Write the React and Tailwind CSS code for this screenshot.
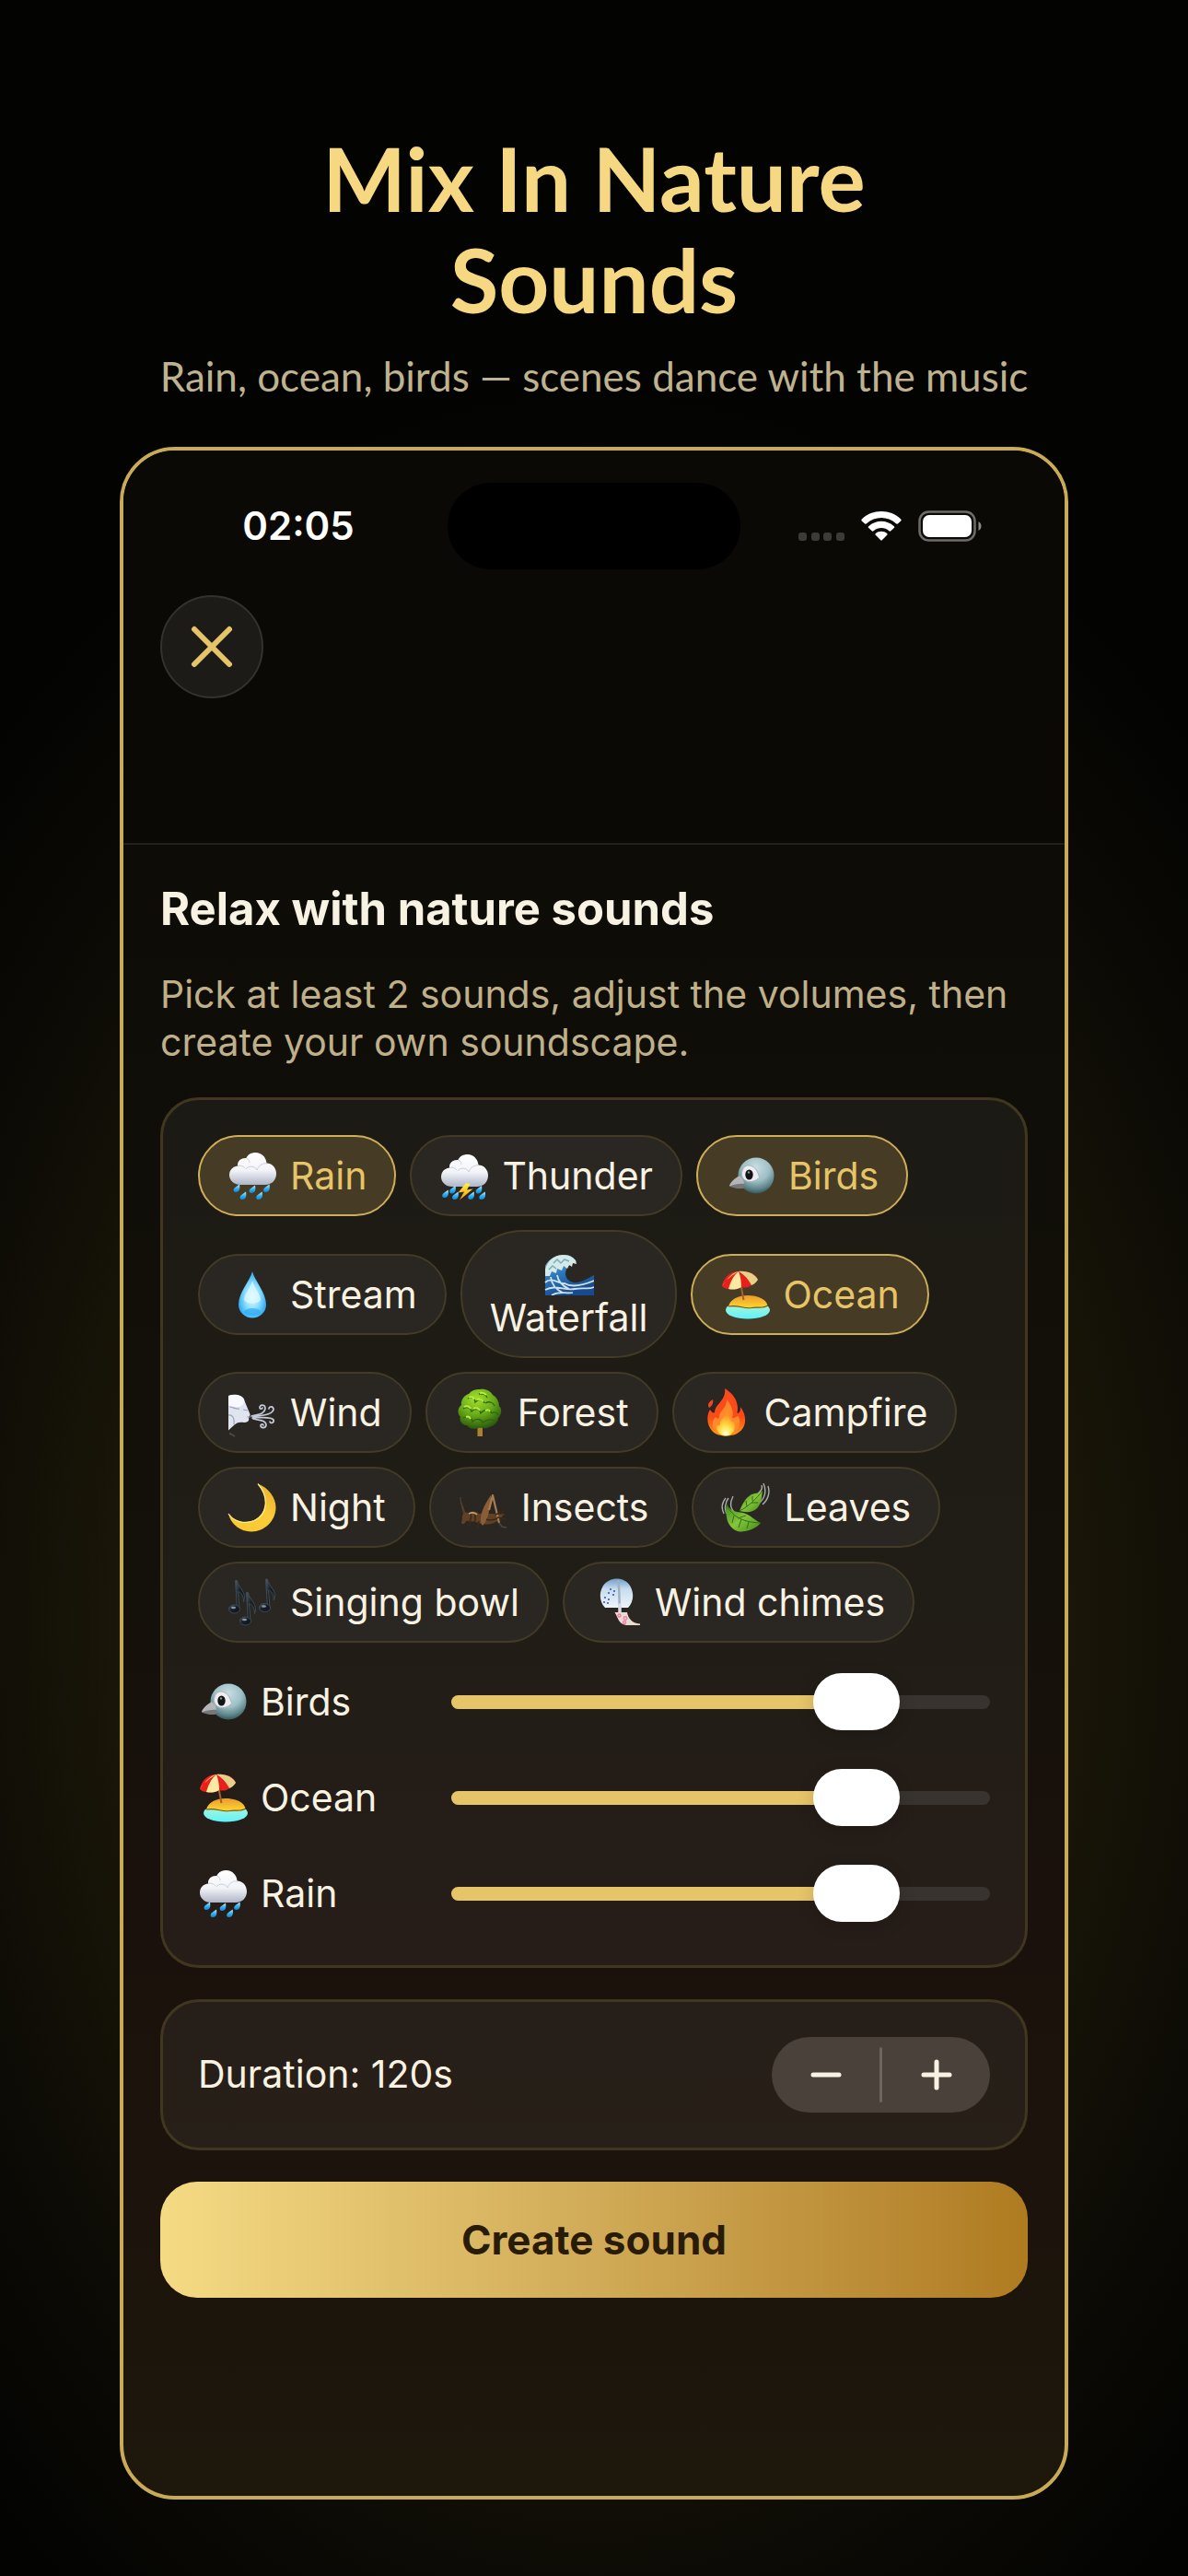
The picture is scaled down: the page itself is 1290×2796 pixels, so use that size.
import { useState } from 'react';

const SOUNDS = [
  { id: 'rain', name: 'Rain', Icon: RainIcon },
  { id: 'thunder', name: 'Thunder', Icon: ThunderIcon },
  { id: 'birds', name: 'Birds', Icon: BirdIcon },
  { id: 'stream', name: 'Stream', Icon: DropIcon },
  { id: 'waterfall', name: 'Waterfall', Icon: WaveIcon, stacked: true },
  { id: 'ocean', name: 'Ocean', Icon: BeachIcon },
  { id: 'wind', name: 'Wind', Icon: WindIcon },
  { id: 'forest', name: 'Forest', Icon: TreeIcon },
  { id: 'campfire', name: 'Campfire', Icon: FireIcon },
  { id: 'night', name: 'Night', Icon: MoonIcon },
  { id: 'insects', name: 'Insects', Icon: CricketIcon },
  { id: 'leaves', name: 'Leaves', Icon: LeavesIcon },
  { id: 'bowl', name: 'Singing bowl', Icon: NotesIcon },
  { id: 'chimes', name: 'Wind chimes', Icon: ChimeIcon },
];

const ROWS = [SOUNDS.slice(0, 3), SOUNDS.slice(3, 6), SOUNDS.slice(6, 9), SOUNDS.slice(9, 12), SOUNDS.slice(12)];

function Emoji({ children }) {
  return (
    <svg viewBox="0 0 54 54" className="w-[54px] h-[54px] -my-px shrink-0" aria-hidden="true">
      {children}
    </svg>
  );
}

// Gradients shared by all the sound icons
function IconDefs() {
  return (
    <svg width="0" height="0" className="absolute" aria-hidden="true">
      <defs>
        <linearGradient id="cloud" x1="0" y1="0" x2="0" y2="1">
          <stop offset="0" stopColor="#ffffff" />
          <stop offset="0.55" stopColor="#f3f4f9" />
          <stop offset="1" stopColor="#aeb5c6" />
        </linearGradient>
        <linearGradient id="drop" x1="0" y1="0" x2="0" y2="1">
          <stop offset="0" stopColor="#c9f1ff" />
          <stop offset="0.5" stopColor="#35b4f5" />
          <stop offset="1" stopColor="#0d84d8" />
        </linearGradient>
        <radialGradient id="bigDrop" cx="0.5" cy="0.55" r="0.6">
          <stop offset="0" stopColor="#e2fbff" />
          <stop offset="0.45" stopColor="#8fe0fd" />
          <stop offset="1" stopColor="#1397f0" />
        </radialGradient>
        <linearGradient id="bolt" x1="0" y1="0" x2="0" y2="1">
          <stop offset="0" stopColor="#fff04a" />
          <stop offset="1" stopColor="#f59c08" />
        </linearGradient>
        <radialGradient id="bird" cx="0.5" cy="0.28" r="0.75">
          <stop offset="0" stopColor="#c9dde3" />
          <stop offset="0.5" stopColor="#9dbfc6" />
          <stop offset="0.8" stopColor="#5c8489" />
          <stop offset="1" stopColor="#2e4b50" />
        </radialGradient>
        <linearGradient id="sand" x1="0" y1="0" x2="0" y2="1">
          <stop offset="0" stopColor="#ea9a35" />
          <stop offset="1" stopColor="#ffd927" />
        </linearGradient>
        <linearGradient id="sea" x1="0" y1="0" x2="0" y2="1">
          <stop offset="0" stopColor="#b8f5d0" />
          <stop offset="1" stopColor="#5df3fb" />
        </linearGradient>
        <linearGradient id="wave" x1="0" y1="0" x2="0.4" y2="1">
          <stop offset="0" stopColor="#7fc4dc" />
          <stop offset="0.5" stopColor="#2c77bd" />
          <stop offset="1" stopColor="#174b8f" />
        </linearGradient>
        <radialGradient id="tree" cx="0.42" cy="0.25" r="0.8">
          <stop offset="0" stopColor="#a4e02a" />
          <stop offset="0.5" stopColor="#68ad18" />
          <stop offset="1" stopColor="#23500b" />
        </radialGradient>
        <linearGradient id="fire" x1="0" y1="0" x2="0" y2="1">
          <stop offset="0" stopColor="#fb4a1d" />
          <stop offset="0.6" stopColor="#fd4a16" />
          <stop offset="1" stopColor="#fd9a12" />
        </linearGradient>
        <radialGradient id="ember" cx="0.5" cy="0.9" r="0.7">
          <stop offset="0" stopColor="#fffde0" />
          <stop offset="0.4" stopColor="#ffe64a" />
          <stop offset="1" stopColor="#ff9427" />
        </radialGradient>
        <linearGradient id="moon" x1="0" y1="1" x2="1" y2="0">
          <stop offset="0" stopColor="#fbc72f" />
          <stop offset="0.6" stopColor="#fbcb3a" />
          <stop offset="1" stopColor="#e9a92a" />
        </linearGradient>
        <linearGradient id="leaf" x1="0" y1="0" x2="1" y2="1">
          <stop offset="0" stopColor="#3f8d1d" />
          <stop offset="0.5" stopColor="#86c43a" />
          <stop offset="1" stopColor="#3f8a1a" />
        </linearGradient>
        <linearGradient id="note" x1="0" y1="0" x2="1" y2="1">
          <stop offset="0" stopColor="#51606b" />
          <stop offset="0.4" stopColor="#1a2228" />
          <stop offset="1" stopColor="#0b0f12" />
        </linearGradient>
        <linearGradient id="glass" x1="0" y1="0" x2="0" y2="1">
          <stop offset="0" stopColor="#6f9dc9" />
          <stop offset="0.35" stopColor="#c6dcee" />
          <stop offset="1" stopColor="#eef5fa" />
        </linearGradient>
      </defs>
    </svg>
  );
}

function Cloud() {
  return (
    <g>
      <path
        d="M14 37C7 37 2 32 2 26.500C2 20.500 6 17 11 16.500C10.500 11 15 7.500 20.500 8C22 4 26 2 30.500 2C37 2 42 7 42.500 13.500C48.500 13.500 53 18.500 53 25C53 32 48 37 41 37Z"
        fill="url(#cloud)"
      />
      <path d="M20 20C22 16 30 16 32 21C34 15 40 13 43 14M11 16.500C14 15.500 17 16.500 19 19M20.500 8C23 9 24 11 24 13" stroke="#c9ced9" strokeWidth="1" fill="none" />
    </g>
  );
}

function Drops({ points }) {
  return points.map(([x, y]) => (
    <path key={x} transform={`translate(${x} ${y})`} d="M3-4.500C4 0 3 4-.8 4C-4 4-4.200.500-1.500-1.300Z" fill="url(#drop)" />
  ));
}

function RainIcon() {
  return (
    <Emoji>
      <Cloud />
      <Drops points={[[10, 41], [27, 42], [42.5, 41], [17, 49], [34.6, 49]]} />
    </Emoji>
  );
}

function ThunderIcon() {
  return (
    <Emoji>
      <g transform="translate(0 2)"><Cloud /></g>
      <Drops points={[[6.6, 47], [14.5, 42.5], [17.5, 49], [34.6, 49], [43, 42.5], [46.7, 49]]} />
      <path d="M29 35L20.500 45.500L27 44.500L22 53.500L36.500 41.500L30 42.500L33.500 36Z" fill="url(#bolt)" />
    </Emoji>
  );
}

function BirdIcon() {
  return (
    <Emoji>
      <circle cx="33" cy="27" r="19.500" fill="url(#bird)" />
      <path d="M15 27C10 30 5 34 4 38.500C8 40.500 15 42 20 40.500C21 36 19 31 15 27Z" fill="#77777a" />
      <path d="M15 27C10 30 5 34 4 38.500C10 36.500 15 35.500 20 36C20 32 18 29 15 27Z" fill="#b4b5b8" />
      <path d="M25 16C31 16 35 22 36.500 29C33 33 27 34.500 23 33C18 31 16.500 26 18 22C19 18.500 21.500 16 25 16Z" fill="#eeeef0" stroke="#a9b5ba" strokeWidth="1" />
      <ellipse cx="25.500" cy="26" rx="4.200" ry="5.500" fill="#121416" />
      <circle cx="25" cy="23.500" r="1.200" fill="#8b9194" />
    </Emoji>
  );
}

function DropIcon() {
  return (
    <Emoji>
      <path d="M27 2C30 13 42 25 42 38A15 14.500 0 0 1 12 38C12 25 24 13 27 2Z" fill="url(#bigDrop)" />
      <path d="M27 12C29 20 36 27 36 33C33 38 21 38 18 33C18 27 25 20 27 12Z" fill="#e6fbff" opacity=".7" />
      <ellipse cx="27" cy="46" rx="9" ry="4" fill="#2aaaf6" opacity=".7" />
    </Emoji>
  );
}

function WaveIcon() {
  return (
    <Emoji>
      <path d="M1 54V22C5 14 13 10 22 10C28 10 33 13 35 18C28 19 23 24 23 31C24 39 32 42 40 39C46 37 50 34 54 32V54Z" fill="url(#wave)" />
      <path d="M1 26C3 18 9 12 16 10.500C24 8.500 31 12 34 16L35 20L31 19L30 23L27 21L25 25L21 22L19 27L14 25L13 30L8 28L6 33L1 33Z" fill="#d5e9e6" />
      <path d="M10 19L14 15L18 19L22 15L27 17M5 26L9 22L13 25" stroke="#77afbf" strokeWidth="1.500" fill="none" />
      <path d="M1 40C8 33 16 42 22 41C30 46 42 43 54 38M1 48C12 42 22 49 33 47S47 48 54 45M8 54C16 48 24 53 31 51M14 32C15 39 20 44 27 47M7 34C8 42 13 48 20 51" stroke="#cfe2e8" strokeWidth="1.800" fill="none" />
    </Emoji>
  );
}

function BeachIcon() {
  return (
    <Emoji>
      <ellipse cx="30" cy="44" rx="24" ry="9.500" fill="url(#sea)" />
      <path d="M9 40C11 32 20 28 30 28C41 28 50 32 51.500 39C46 43 40 40 34 41.500C26 43 20 38 9 40Z" fill="url(#sand)" />
      <path d="M9 40C20 38 26 43 34 41.500C40 40 46 43 51.500 39" stroke="#6e531b" strokeWidth="1.200" fill="none" />
      <path d="M20 4L25.500 33" stroke="#a4612c" strokeWidth="2" />
      <path d="M2 18C4 8 11 2 20 2C31 1 39 5 41 11C38 15 36 16 34 17C30 20 27 20 23 19C18 22 13 22 9 21C6 21 4 20 2 18Z" fill="#e9201a" />
      <path d="M20 2C14 7 11 14 9 21C13 22 18 22 23 19C23 13 22 7 20 2Z" fill="#fdeaa2" />
      <path d="M20 2C27 6 31 11 34 17C37 16 39 14 41 11C38 5 30 1 20 2Z" fill="#e6d18a" />
      <path d="M20 2C14 3 9 8 2 18C5 12 14 5 20 2Z" fill="#f6dd8c" />
    </Emoji>
  );
}

function WindIcon() {
  return (
    <Emoji>
      <path d="M1 9C8 7 16 8 18 13C20 18 22 23 24.500 29C25 31 23 31 23 33C24 36 22 38 18 38C13 37 10 38 7 41L1 46.500Z" fill="#dfe4ee" />
      <path d="M1 9C7 6.500 16 8 18 13C19 17 16 21 11 21C7 22 4 19 1 20Z" fill="#f8f9fc" />
      <path d="M2 21C6 21 9 24 13 23M1 30C5 29 8 33 7 40M17 24L22 25M21 32H25" stroke="#9aa4b8" strokeWidth="1.200" fill="none" />
      <path d="M26 31C34 29 40 29 41 23C41 18 35 18 35 22C36 24 38 23 38 22M28 32C38 30 48 30 50 24C50 20 45 20 45 23M27 33C35 33 47 31 50 35C51 38 47 40 46 37M28 34C34 36 42 35 42 41C41 45 36 44 36 41C37 39 39 40 39 41" stroke="#c3cad8" strokeWidth="1.700" fill="none" strokeLinecap="round" />
      <path d="M2 50C4 50 6 52 8 53" stroke="#494949" strokeWidth="2" />
    </Emoji>
  );
}

function TreeIcon() {
  return (
    <Emoji>
      <path d="M24.500 42H30V53H24.500Z" fill="#a8842f" />
      <path d="M27 2C33 1 39 4 41 8C46 11 48 16 48 20C52 24 50 30 47 33C47 38 42 42 37 43C33 46 29 43 26 44C20 46 15 44 13 41C8 41 4 36 6 32C2 28 3 22 7 19C6 13 11 8 15 7C18 3 22 2 27 2Z" fill="url(#tree)" />
      <path d="M14 12C18 9 22 12 22 16C26 12 31 13 32 17M26 7C30 6 34 8 35 11M9 23C13 20 17 22 18 26C22 22 27 23 28 28C32 23 38 23 40 28M33 17C38 14 42 17 43 20M9 33C14 30 18 32 19 37C23 33 29 34 30 38C34 35 40 34 43 36M40 28C43 26 46 27 47 30" stroke="#2f650e" strokeWidth="1.300" fill="none" />
      <path d="M15 11C18 9 20 11 21 13M27 6C30 5 32 6 34 8M10 21C13 19 16 21 17 23M24 13C27 12 29 13 31 15M20 23C23 21 26 23 27 25M33 25C35 24 37 24 38 26M12 32C14 31 16 32 17 34" stroke="#bdea45" strokeWidth="2" fill="none" />
    </Emoji>
  );
}

function FireIcon() {
  return (
    <Emoji>
      <path d="M25 1C33 6 39 13 39 23C39 26 38 28 39 28C42 27 42 24 42 21C49 30 49 42 41 48C35 54 18 54 12 48C5 41 5 30 9 24C11 27 12 28 14 27C14 18 27 14 25 1Z" fill="url(#fire)" />
      <path d="M12 13C7 16 6 19 8 22C11 20 13 17 12 13Z" fill="#f6451f" />
      <path d="M27 13C33 20 35 27 33 33C36 34 38 31 40 31C43 39 40 46 34 50C28 54 17 52 14 46C10 41 12 35 15 32C17 34 18 34 19 33C18 26 28 22 27 13Z" fill="#ff8a2b" />
      <path d="M27 25C31 31 30 36 33 37C36 37 36 41 36 43C35 49 32 52 26 52.500C20 52 15 48 16 41C18 42 19 41 20 40C19 34 27 32 27 25Z" fill="url(#ember)" />
    </Emoji>
  );
}

function MoonIcon() {
  return (
    <Emoji>
      <path d="M33 1.500C45 6 53 17 52.500 28C52 42 40 53.500 26 53.500C14 53.500 4 46 1 34C8 44 20 45 29 41C42 35 46 17 33 1.500Z" fill="url(#moon)" />
      <path d="M33 1.500C46 17 43 35 29 41.500C20 45 8 44 1 34" stroke="#ffee8e" strokeWidth="1.200" fill="none" />
    </Emoji>
  );
}

function CricketIcon() {
  return (
    <Emoji>
      <path d="M6 36C5 30 2 24 2 16M8 36C6 30 4 26 3 22" stroke="#53412f" strokeWidth="1.200" fill="none" />
      <path d="M4 40C3 34 7 31 11 33C16 30 20 32 22 34L24 34C28 30 31 32 33 34C40 34 47 35 50 34C47 37 44 42 38 44C30 47 22 45 17 42C13 44 10 41 8 42C7 46 3 46 3 43Z" fill="#5f4127" />
      <path d="M24 44C23 34 28 24 35 14C36 18 35 24 33 31C32 37 30 43 26 47Z" fill="#8a5d36" />
      <path d="M33 30L37 14L44 44" stroke="#a97b52" strokeWidth="2.200" fill="none" strokeLinejoin="round" />
      <path d="M44 44L47 48L52 49" stroke="#4d4740" strokeWidth="1.500" fill="none" />
      <path d="M12 33C14 36 14 39 12 42M18 32V42M22 42L21 49M14 42L11 47M30 40C34 42 38 41 42 39M42 38L52 40M40 35L50 31" stroke="#3d2817" strokeWidth="1.500" fill="none" />
      <path d="M11 34C15 32 18 33 20 35" stroke="#c89d6e" strokeWidth="1.500" fill="none" />
    </Emoji>
  );
}

function LeavesIcon() {
  return (
    <Emoji>
      <path d="M3 34C0 28 1 22 5 17M6 34C3 28 5 21 8 17M14 32C9 27 10 21 13 15M42 22C48 16 49 8 46 1M45 24C52 18 53 10 51 4M40 12C44 9 45 6 44 3" stroke="#a9adab" strokeWidth="1.400" fill="none" />
      <path d="M6 23C9 31 16 32 24 33C32 35 36 41 43 44C38 50 28 54 20 53.500C12 52 7 45 6 38C5 32 5 28 6 23Z" fill="url(#leaf)" />
      <path d="M20 31C23 24 26 17 33 13C38 11 42 12 45 9C44 15 44 22 40 27C35 33 27 33 20 31Z" fill="url(#leaf)" />
      <path d="M6 24C11 36 22 43 42 44M14 36L12 44M22 40L19 49M30 43L28 50M18 39L27 36M20 31C30 26 38 18 45 9M28 26L27 20M34 20V15M33 22L40 22" stroke="#2f6f15" strokeWidth="1" fill="none" />
    </Emoji>
  );
}

function Note() {
  return (
    <g fill="url(#note)" stroke="#3c4b57" strokeWidth="1">
      <path d="M0-31L2-31C3-23 13-19 9-8C9-15 6-18 3-19L4.500 0H2Z" />
      <ellipse cx="-1" cy="0" rx="6" ry="4.500" />
      <ellipse cx="-2" cy="-1.500" rx="2.500" ry="1.200" fill="#8796a3" stroke="none" />
    </g>
  );
}

function NotesIcon() {
  return (
    <Emoji>
      <g transform="translate(8.500 34.500)"><Note /></g>
      <g transform="translate(41.500 33)"><Note /></g>
      <g transform="translate(20.500 47.500)"><Note /></g>
    </Emoji>
  );
}

function ChimeIcon() {
  return (
    <Emoji>
      <path d="M14 33C8 27 7 17 12 9C19-1 35-1 41 9C46 17 45 27 39 33Z" fill="url(#glass)" />
      <path d="M28 3C30 12 29 23 30 34" stroke="#9fb2c2" strokeWidth="2.500" fill="none" />
      <path d="M30 30V38" stroke="#d8dfe4" strokeWidth="3.500" strokeLinecap="round" />
      <g fill="#3b55cc">
        <circle cx="20" cy="13" r="1.100" /><circle cx="24" cy="15" r="1.100" /><circle cx="18" cy="17" r="1.100" />
        <circle cx="23" cy="19" r="1.100" /><circle cx="14" cy="22" r="1.100" /><circle cx="18" cy="24" r="1.100" />
        <circle cx="13" cy="27" r="1.100" /><circle cx="17" cy="28" r="1.100" />
      </g>
      <path d="M24.500 38H38C39 44 43 50 52 50.500V52H37C29 51 28 44 24.500 38Z" fill="#eadbd0" />
      <g fill="none" stroke="#ee7fae" strokeWidth="1.400">
        <circle cx="29.500" cy="41.500" r="1.500" /><circle cx="36" cy="44.500" r="1.700" /><circle cx="35" cy="49" r="1.500" />
      </g>
    </Emoji>
  );
}

function StatusBar() {
  return (
    <div className="grid grid-cols-[1fr_318px_1fr] items-center pt-[35px]">
      <div className="justify-self-center pr-3 text-[42px] leading-[52px] font-semibold text-white">02:05</div>
      <div className="h-[94px] rounded-full bg-black" />
      <div className="flex items-center pl-[63px]">
        <svg viewBox="0 0 52 32" className="w-[52px] h-8 mr-4" fill="#3c3b38" aria-hidden="true">
          <rect x="0" y="23" width="9" height="9" rx="3" />
          <rect x="14" y="23" width="9" height="9" rx="3" />
          <rect x="27" y="23" width="9" height="9" rx="3" />
          <rect x="41" y="23" width="9" height="9" rx="3" />
        </svg>
        <svg viewBox="0 0 44 32" className="w-11 h-8 mr-[18px]" fill="#fff" aria-hidden="true">
          <path d="M.8 8.500C12-2.800 32-2.800 43.200 8.500C43.800 9.200 43.800 9.800 43.200 10.400L39.800 13.400C39.200 13.900 38.700 13.900 38 13.300C29 5 15 5 6 13.300C5.300 13.900 4.800 13.900 4.200 13.400L.8 10.400C.2 9.800.2 9.200.8 8.500Z" />
          <path d="M8.200 16.200C16 8.800 28 8.800 35.800 16.200C36.500 16.900 36.500 17.400 35.800 18L32.300 21.200C31.600 21.800 31.100 21.800 30.400 21.200C25.500 17 18.500 17 13.600 21.200C12.900 21.800 12.400 21.800 11.700 21.200L8.200 18C7.500 17.400 7.500 16.900 8.200 16.200Z" />
          <path d="M15.800 24C19 21 25 21 28.200 24C28.800 24.600 28.800 25.200 28.200 25.800L23 31C22.300 31.700 21.700 31.700 21 31L15.800 25.800C15.200 25.200 15.200 24.600 15.800 24Z" />
        </svg>
        <svg viewBox="0 0 70 34" className="w-[70px] h-[34px]" aria-hidden="true">
          <rect x="1.500" y="1.500" width="60" height="31" rx="10" fill="none" stroke="#6d6c6a" strokeWidth="2.500" />
          <rect x="5" y="5" width="53" height="24" rx="7" fill="#fff" />
          <path d="M65.500 12C69.500 14 69.500 20 65.500 22Z" fill="#8b8a88" />
        </svg>
      </div>
    </div>
  );
}

function SoundChip({ sound, active, onToggle }) {
  const { Icon, name, stacked } = sound;
  return (
    <button
      type="button"
      aria-pressed={active}
      onClick={() => onToggle(sound.id)}
      className={`flex items-center border-2 px-[30px] py-4 ${
        stacked ? 'flex-col rounded-[68px] leading-[51px]' : 'gap-3.5 rounded-[44px] leading-[52px]'
      } ${active ? 'border-[#cfae58] bg-[#463b25] text-[#e6c468]' : 'border-[#433a27] bg-[#2a2622] text-[#f8f2e2]'}`}
    >
      <Icon />
      <span>{name}</span>
    </button>
  );
}

function VolumeRow({ sound, value, onChange }) {
  const { Icon, id, name } = sound;
  return (
    <div className="flex items-center h-[104px]">
      <label htmlFor={`volume-${id}`} className="flex items-center gap-3.5 w-[275px] shrink-0 leading-[52px]">
        <Icon />
        <span>{name}</span>
      </label>
      <div className="relative flex items-center grow h-[62px]">
        <div className="absolute inset-x-0 h-[15px] rounded-full bg-[#38332f]" />
        <div className="absolute left-0 h-[15px] rounded-l-full bg-[#e6c468]" style={{ width: `${value}%` }} />
        <input
          id={`volume-${id}`}
          type="range"
          min="0"
          max="100"
          value={value}
          onChange={(e) => onChange(id, Number(e.target.value))}
          className="relative w-full h-[62px] appearance-none bg-transparent [&::-webkit-slider-thumb]:appearance-none [&::-webkit-slider-thumb]:w-[94px] [&::-webkit-slider-thumb]:h-[62px] [&::-webkit-slider-thumb]:rounded-full [&::-webkit-slider-thumb]:bg-white [&::-webkit-slider-thumb]:shadow-[0_4px_18px_rgba(0,0,0,0.15)]"
        />
      </div>
    </div>
  );
}

export default function App() {
  const [volumes, setVolumes] = useState({ birds: 80, ocean: 80, rain: 80 });
  const [duration, setDuration] = useState(120);

  const toggleSound = (id) => {
    setVolumes((prev) => {
      const next = { ...prev };
      if (id in next) delete next[id];
      else next[id] = 80;
      return next;
    });
  };

  const changeVolume = (id, value) => setVolumes((prev) => ({ ...prev, [id]: value }));

  const mixed = SOUNDS.filter((s) => s.id in volumes).sort((a, b) => a.name.localeCompare(b.name));

  return (
    <div className="min-h-screen px-[130px] pt-[138px] pb-20 bg-[#030302] bg-[radial-gradient(ellipse_72%_48%_at_50%_63%,#262008_0%,#1a1608_55%,#0b0a05_80%,#030302_100%)]">
      <IconDefs />

      <header className="text-center font-[Lato,sans-serif]">
        <h1 className="px-[120px] text-[96px] leading-[110px] font-bold text-[#f5d881]">Mix In Nature Sounds</h1>
        <p className="mt-[22px] text-[44px] leading-[56px] whitespace-nowrap text-[#bfb38f]">
          Rain, ocean, birds — scenes dance with the music
        </p>
      </header>

      <main className="mt-[49px] overflow-hidden rounded-[60px] border-4 border-[#c9aa55] bg-[linear-gradient(to_bottom,#0a0905_0%,#0e0c07_20%,#14110a_56%,#1b110c_72%,#1d170c_100%)] font-[Inter,sans-serif] text-[41px]">
        <div className="border-b-2 border-[#22201b] bg-[#0a0905] px-10 pb-[157px]">
          <StatusBar />
          <button
            type="button"
            aria-label="Close"
            className="mt-7 flex h-28 w-28 items-center justify-center rounded-full border-2 border-[#34322b] bg-[#1d1b18]"
          >
            <svg viewBox="0 0 46 46" className="w-[46px] h-[46px]" stroke="#e6c468" strokeWidth="6" strokeLinecap="round">
              <path d="M4 4L42 42M42 4L4 42" />
            </svg>
          </button>
        </div>

        <div className="px-10 pt-10 pb-[215px]">
          <h2 className="text-[49px] leading-[60px] font-bold text-[#f8f2e2]">Relax with nature sounds</h2>
          <p className="mt-9 leading-[52px] text-[#bfb089]">
            Pick at least 2 sounds, adjust the volumes, then create your own soundscape.
          </p>

          {/* Sound picker and mixer */}
          <section className="mt-[34px] rounded-[42px] border-3 border-[#41361f] bg-white/5 px-[38px] pt-[38px] pb-[26px] text-[#f8f2e2]">
            <div className="flex flex-col gap-[15px]">
              {ROWS.map((row) => (
                <div key={row[0].id} className="flex items-center gap-[15px]">
                  {row.map((sound) => (
                    <SoundChip key={sound.id} sound={sound} active={sound.id in volumes} onToggle={toggleSound} />
                  ))}
                </div>
              ))}
            </div>
            <div className="mt-3">
              {mixed.map((sound) => (
                <VolumeRow key={sound.id} sound={sound} value={volumes[sound.id]} onChange={changeVolume} />
              ))}
            </div>
          </section>

          {/* Duration */}
          <section className="mt-[34px] flex items-center justify-between rounded-[42px] border-3 border-[#41361f] bg-white/5 px-[38px] py-[38px] text-[#f8f2e2]">
            <span>Duration: {duration}s</span>
            <div className="flex items-center w-[237px] h-[82px] rounded-full bg-[#4a423a]">
              <button
                type="button"
                aria-label="Decrease duration"
                onClick={() => setDuration((d) => Math.max(10, d - 10))}
                className="flex h-full flex-1 items-center justify-center"
              >
                <svg viewBox="0 0 34 34" className="w-[34px] h-[34px]" stroke="#f8f2e2" strokeWidth="5" strokeLinecap="round">
                  <path d="M3 17H31" />
                </svg>
              </button>
              <div className="h-[60px] w-[3px] rounded-full bg-[#6e665d]" />
              <button
                type="button"
                aria-label="Increase duration"
                onClick={() => setDuration((d) => d + 10)}
                className="flex h-full flex-1 items-center justify-center"
              >
                <svg viewBox="0 0 34 34" className="w-[34px] h-[34px]" stroke="#f8f2e2" strokeWidth="5" strokeLinecap="round">
                  <path d="M3 17H31M17 3V31" />
                </svg>
              </button>
            </div>
          </section>

          <button
            type="button"
            className="mt-[34px] w-full rounded-[40px] bg-linear-to-r from-[#f5da84] via-[#d1ab57] to-[#af7b20] py-[37px] text-[44px] leading-[52px] font-bold text-[#291c06]"
          >
            Create sound
          </button>
        </div>
      </main>
    </div>
  );
}
